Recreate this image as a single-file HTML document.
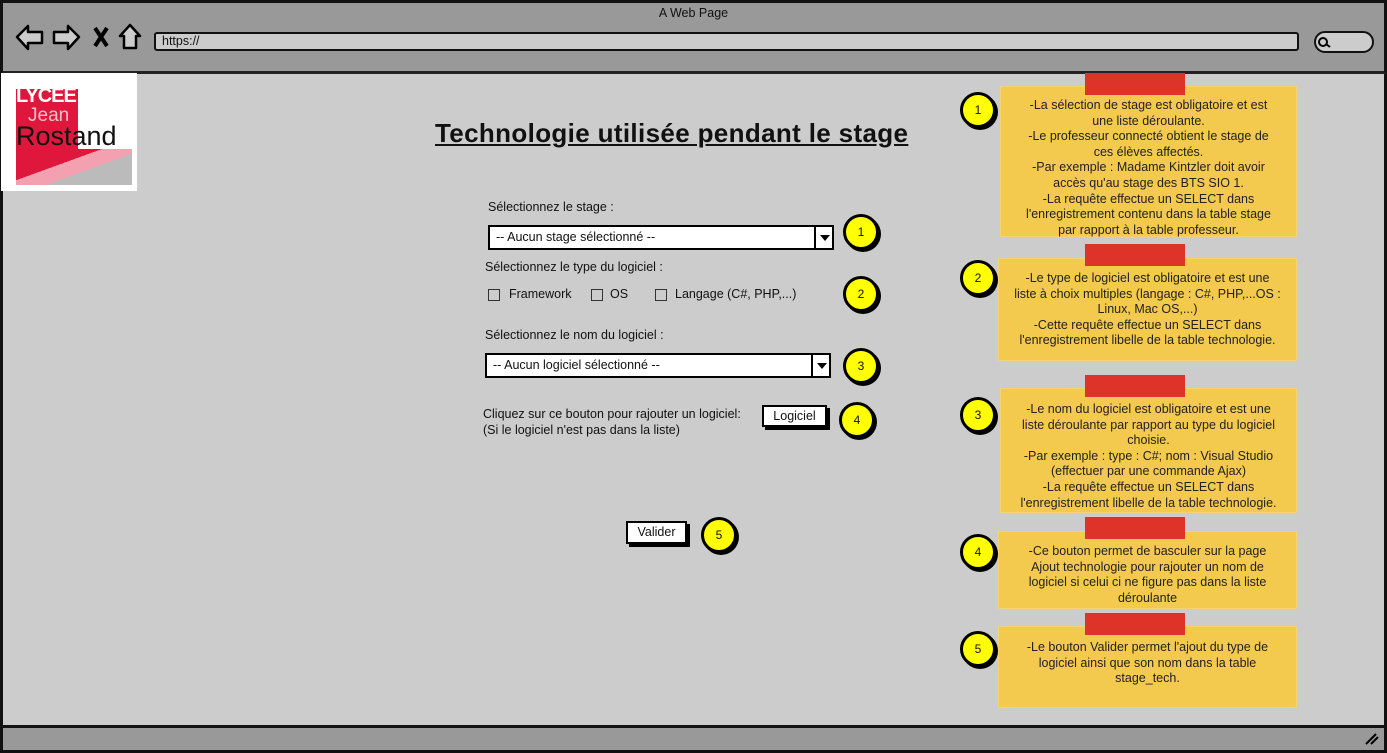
<!DOCTYPE html>
<html><head><meta charset="utf-8"><style>
*{margin:0;padding:0;box-sizing:border-box}
body{width:1387px;height:753px;background:#ccc;font-family:"Liberation Sans",sans-serif;position:relative;overflow:hidden;color:#111}
.a{position:absolute}
.note{position:absolute;background:#f3c94e;font-size:12.5px;line-height:15.6px;text-align:center;color:#222;box-shadow:0 0 0 1px #f5d370 inset}
.tape{position:absolute;background:#dd3329;width:100px;height:22px}
.circ{position:absolute;width:36px;height:36px;border-radius:50%;background:#ff0;border:3px solid #000;box-shadow:2px 2px 0 #000;font-size:12px;display:flex;align-items:center;justify-content:center}
.lbl{position:absolute;font-size:12.5px}
.sel{position:absolute;background:#fff;border:2px solid #000;height:25px;font-size:12.5px;line-height:21px;padding-left:6px}
.sel i{position:absolute;right:0;top:0;width:18px;height:21px;border-left:2px solid #000}
.sel i:after{content:"";position:absolute;left:4px;top:8px;border:5px solid transparent;border-top:6px solid #000}
.cb{position:absolute;width:12px;height:12px;border:1.5px solid #333;background:#ccc}
.btn{position:absolute;background:#fff;border:2px solid #000;box-shadow:3px 3px 0 #000;font-size:12.5px;text-align:center}
</style></head><body>
<div class="a" style="left:0;top:0;width:1387px;height:74px;background:#999;border:3px solid #111;border-bottom:3px solid #222"></div>
<div class="a" style="left:0;top:6px;width:1387px;text-align:center;font-size:12.5px">A Web Page</div>
<svg class="a" style="left:14px;top:22px" width="130" height="30" viewBox="0 0 130 30">
<path d="M3 15 L14 4 L14 10 L28 10 L28 21 L14 21 L14 27 Z" fill="#ccc" stroke="#000" stroke-width="2.5" stroke-linejoin="round"/>
<path d="M65 15 L54 4 L54 10 L40 10 L40 21 L54 21 L54 27 Z" fill="#ccc" stroke="#000" stroke-width="2.5" stroke-linejoin="round"/>
<path d="M81 6 L93 24 M93 6 L81 24" stroke="#000" stroke-width="4"/>
<path d="M106 14 L116 3 L126 14 L122 14 L122 26 L110 26 L110 14 Z" fill="#ccc" stroke="#000" stroke-width="2.5" stroke-linejoin="round"/>
</svg>
<div class="a" style="left:154px;top:32px;width:1145px;height:19px;background:#ccc;border:2.5px solid #111;border-radius:3px;font-size:12.5px;line-height:14px;padding-left:6px">https://</div>
<div class="a" style="left:1314px;top:31px;width:60px;height:22px;background:#ccc;border:2.5px solid #111;border-radius:11px"></div>
<svg class="a" style="left:1317px;top:35px" width="16" height="14"><circle cx="6" cy="7" r="4" fill="none" stroke="#000" stroke-width="2"/><path d="M9 9 L13 12" stroke="#000" stroke-width="2"/></svg>
<div class="a" style="left:0;top:74px;width:3px;height:655px;background:#111"></div>
<div class="a" style="right:0;top:74px;width:3px;height:655px;background:#111"></div>
<div class="a" style="left:0;top:725px;width:1387px;height:28px;background:#999;border:3px solid #111"></div>
<svg class="a" style="left:1364px;top:732px" width="16" height="14"><path d="M2 12 L12 2 M7 12 L14 5" stroke="#000" stroke-width="2"/></svg>
<div class="a" style="left:1px;top:73px;width:136px;height:118px;background:#fff"></div>
<div class="a" style="left:16px;top:89px;width:62px;height:60px;background:#e0173c"></div>
<div class="a" style="left:16px;top:149px;width:116px;height:36px;background:linear-gradient(160deg,#e0173c 0 40%,#f3a0b0 40% 60%,#bbb 60%)"></div>
<div class="a" style="left:16px;top:85px;color:#fff;font-weight:bold;font-size:20px;letter-spacing:-1px">LYCÉE</div>
<div class="a" style="left:28px;top:105px;color:#f4c0c8;font-size:19px">Jean</div>
<div class="a" style="left:16px;top:121px;color:#111;font-size:27px;letter-spacing:0px">Rostand</div>
<div class="a" style="left:435px;top:118px;font-size:26px;font-weight:bold;text-decoration:underline;letter-spacing:0.35px">Technologie utilisée pendant le stage</div>
<div class="lbl" style="left:488px;top:200px">Sélectionnez le stage :</div>
<div class="sel" style="left:488px;top:225px;width:346px">-- Aucun stage sélectionné --<i></i></div>
<div class="lbl" style="left:485px;top:260px">Sélectionnez le type du logiciel :</div>
<div class="cb" style="left:488px;top:289px"></div><div class="lbl" style="left:509px;top:287px">Framework</div>
<div class="cb" style="left:591px;top:289px"></div><div class="lbl" style="left:610px;top:287px">OS</div>
<div class="cb" style="left:655px;top:289px"></div><div class="lbl" style="left:675px;top:287px">Langage (C#, PHP,...)</div>
<div class="lbl" style="left:485px;top:328px">Sélectionnez le nom du logiciel :</div>
<div class="sel" style="left:485px;top:353px;width:346px">-- Aucun logiciel sélectionné --<i></i></div>
<div class="lbl" style="left:483px;top:406px;line-height:16px">Cliquez sur ce bouton pour rajouter un logiciel:<br>(Si le logiciel n'est pas dans la liste)</div>
<div class="btn" style="left:762px;top:405px;width:65px;height:22px;line-height:18px">Logiciel</div>
<div class="btn" style="left:626px;top:521px;width:61px;height:23px;line-height:19px">Valider</div>
<div class="circ" style="left:843px;top:214px">1</div>
<div class="circ" style="left:843px;top:276px">2</div>
<div class="circ" style="left:843px;top:348px">3</div>
<div class="circ" style="left:839px;top:402px">4</div>
<div class="circ" style="left:701px;top:517px">5</div>
<div class="note" style="left:1000px;top:86px;width:297px;height:151px;padding-top:12px">-La sélection de stage est obligatoire et est<br>une liste déroulante.<br>-Le professeur connecté obtient le stage de<br>ces élèves affectés.<br>-Par exemple : Madame Kintzler doit avoir<br>accès qu'au stage des BTS SIO 1.<br>-La requête effectue un SELECT dans<br>l'enregistrement contenu dans la table stage<br>par rapport à la table professeur.</div>
<div class="tape" style="left:1085px;top:73px"></div>
<div class="note" style="left:998px;top:258px;width:299px;height:103px;padding-top:13px">-Le type de logiciel est obligatoire et est une<br>liste à choix multiples (langage : C#, PHP,...OS :<br>Linux, Mac OS,...)<br>-Cette requête effectue un SELECT dans<br>l'enregistrement libelle de la table technologie.</div>
<div class="tape" style="left:1085px;top:244px"></div>
<div class="note" style="left:1000px;top:388px;width:297px;height:125px;padding-top:14px">-Le nom du logiciel est obligatoire et est une<br>liste déroulante par rapport au type du logiciel<br>choisie.<br>-Par exemple : type : C#; nom : Visual Studio<br>(effectuer par une commande Ajax)<br>-La requête effectue un SELECT dans<br>l'enregistrement libelle de la table technologie.</div>
<div class="tape" style="left:1085px;top:375px"></div>
<div class="note" style="left:998px;top:531px;width:299px;height:78px;padding-top:13px">-Ce bouton permet de basculer sur la page<br>Ajout technologie pour rajouter un nom de<br>logiciel si celui ci ne figure pas dans la liste<br>déroulante</div>
<div class="tape" style="left:1085px;top:517px"></div>
<div class="note" style="left:998px;top:626px;width:299px;height:82px;padding-top:14px">-Le bouton Valider permet l'ajout du type de<br>logiciel ainsi que son nom dans la table<br>stage_tech.</div>
<div class="tape" style="left:1085px;top:613px"></div>
<div class="circ" style="left:960px;top:92px">1</div>
<div class="circ" style="left:960px;top:260px">2</div>
<div class="circ" style="left:960px;top:397px">3</div>
<div class="circ" style="left:960px;top:534px">4</div>
<div class="circ" style="left:960px;top:631px">5</div>
</body></html>
